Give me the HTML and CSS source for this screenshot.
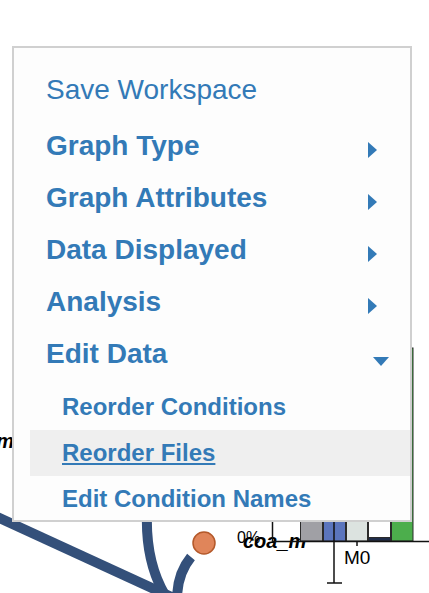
FILE: index.html
```html
<!DOCTYPE html>
<html>
<head>
<meta charset="utf-8">
<link rel="stylesheet" href="styles.css">
</head>
<body>
<div class="stage">
  <svg class="chart" width="429" height="593" viewBox="0 0 429 593">
    <g class="links" fill="none" stroke="#34507a" stroke-width="10">
      <line x1="-20" y1="509" x2="178" y2="600"/>
      <path d="M147 512 Q145 565 168 600"/>
      <path d="M191 557 Q177 574 177 600"/>
    </g>
    <text x="14" y="448" class="lbl-bi" text-anchor="end">coa_m</text>
    <circle cx="204" cy="543" r="11" fill="#e0855a" stroke="#b4592a" stroke-width="1.5"/>
    <text x="237" y="543" class="lbl-pct">0%</text>
    <text x="243" y="548" class="lbl-bi">coa_m</text>
    <g stroke="#2b2b2b" stroke-width="1">
      <rect x="300.5" y="490" width="22" height="51" fill="#a0a0a5"/>
      <rect x="323.5" y="490" width="22" height="51" fill="#5b75bd"/>
      <rect x="346.5" y="490" width="21" height="51" fill="#dce3e0"/>
      <rect x="368.5" y="490" width="22" height="51" fill="#ffffff"/>
      <rect x="368.5" y="537.5" width="22" height="3.5" fill="#1f2d4a"/>
      <rect x="391.5" y="348" width="21.5" height="193" fill="#4cae4c"/>
    </g>
    <g stroke="#111" stroke-width="1.5" fill="none">
      <line x1="272.5" y1="500" x2="272.5" y2="542"/>
      <line x1="272" y1="541.5" x2="429" y2="541.5"/>
      <line x1="334" y1="490" x2="334" y2="583"/>
      <line x1="327" y1="583" x2="342" y2="583"/>
      <line x1="357" y1="541" x2="357" y2="546"/>
    </g>
    <text x="344" y="564" class="lbl-tick">M0</text>
  </svg>

  <div class="menu">
    <ul class="menu-list">
      <li class="item item-plain"><span class="link">Save Workspace</span></li>
      <li class="item"><span class="link">Graph Type</span>
        <svg class="caret-right" viewBox="0 0 9 16"><polygon points="0,0 9,8 0,16"/></svg></li>
      <li class="item"><span class="link">Graph Attributes</span>
        <svg class="caret-right" viewBox="0 0 9 16"><polygon points="0,0 9,8 0,16"/></svg></li>
      <li class="item"><span class="link">Data Displayed</span>
        <svg class="caret-right" viewBox="0 0 9 16"><polygon points="0,0 9,8 0,16"/></svg></li>
      <li class="item"><span class="link">Analysis</span>
        <svg class="caret-right" viewBox="0 0 9 16"><polygon points="0,0 9,8 0,16"/></svg></li>
      <li class="item"><span class="link">Edit Data</span>
        <svg class="caret-down" viewBox="0 0 16 9"><polygon points="0,0 16,0 8,9"/></svg></li>
      <li class="submenu">
        <ul class="sub-list">
          <li class="sub-item"><span class="link">Reorder Conditions</span></li>
          <li class="sub-item active"><span class="link">Reorder Files</span></li>
          <li class="sub-item"><span class="link">Edit Condition Names</span></li>
        </ul>
      </li>
    </ul>
  </div>
</div>
</body>
</html>
```

FILE: styles.css
```css
html, body {
  margin: 0;
  padding: 0;
  background: #ffffff;
}

body {
  font-family: "Liberation Sans", Arial, sans-serif;
}

.stage {
  position: relative;
  width: 429px;
  height: 593px;
  overflow: hidden;
}

.chart {
  position: absolute;
  left: 0;
  top: 0;
}

.lbl-bi {
  font-family: "Liberation Sans", Arial, sans-serif;
  font-size: 20px;
  font-weight: bold;
  font-style: italic;
  fill: #000;
}

.lbl-pct {
  font-family: "Liberation Sans", Arial, sans-serif;
  font-size: 16px;
  fill: #000;
}

.lbl-tick {
  font-family: "Liberation Sans", Arial, sans-serif;
  font-size: 19px;
  fill: #000;
}

.menu {
  position: absolute;
  left: 12px;
  top: 46px;
  width: 396px;
  border: 2px solid #d0d0d0;
  background: #fdfdfd;
}

.menu-list {
  list-style: none;
  margin: 0;
  padding: 12px 0 0 0;
}

.item {
  display: flex;
  align-items: center;
  justify-content: space-between;
  height: 52px;
  padding-left: 32px;
  font-size: 28px;
  font-weight: bold;
  color: #337ab7;
}

.item .link {
  line-height: 52px;
  white-space: nowrap;
}

.item-plain {
  height: 60px;
  font-weight: normal;
}

.item-plain .link {
  line-height: 60px;
}

.caret-right {
  width: 9px;
  height: 16px;
  margin: 8px 33px 0 0;
  fill: #337ab7;
}

.caret-down {
  width: 16px;
  height: 9px;
  margin: 14px 21px 0 0;
  fill: #337ab7;
}

.submenu {
  margin: 4px 0 0 16px;
}

.sub-list {
  list-style: none;
  margin: 0;
  padding: 0;
}

.sub-item {
  height: 46px;
  line-height: 46px;
  padding-left: 32px;
  font-size: 24px;
  font-weight: bold;
  color: #337ab7;
  white-space: nowrap;
}

.sub-item:last-child {
  height: 44px;
}

.sub-item.active {
  background: #efefef;
}

.sub-item.active .link {
  text-decoration: underline;
}
```
